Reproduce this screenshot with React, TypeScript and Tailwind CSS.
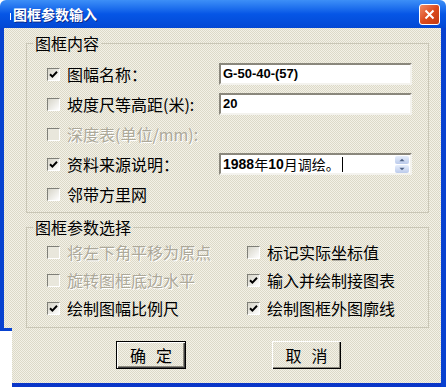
import React from "react";

const cjk = "font-['Noto_Sans_CJK_SC','Noto_Sans',sans-serif]";
const dither =
  "bg-[repeating-conic-gradient(#f3f1e7_0%_25%,#dcd9c8_0%_50%)] bg-[length:2px_2px]";

function Check({ checked, disabled }: { checked?: boolean; disabled?: boolean }) {
  return (
    <span
      className={`flex h-[13px] w-[13px] shrink-0 items-center justify-center border border-t-[#7f7f78] border-l-[#7f7f78] border-r-white border-b-white ${
        disabled ? "bg-[#e9e7dc]" : "bg-gradient-to-br from-[#d6d4c8] to-white"
      }`}
    >
      {checked && (
        <svg width="9" height="9" viewBox="0 0 9 9">
          <path d="M1 4.2 L3.4 6.6 L8 1.8" fill="none" stroke="#000" strokeWidth="2" />
        </svg>
      )}
    </span>
  );
}

function Option({
  label,
  checked,
  disabled,
}: {
  label: string;
  checked?: boolean;
  disabled?: boolean;
}) {
  return (
    <div className="flex items-center gap-[7px]">
      <Check checked={checked} disabled={disabled} />
      <span
        className={`text-[16px] leading-none whitespace-nowrap ${
          disabled ? "text-[#aca899] [text-shadow:1px_1px_0_#fff]" : "text-black"
        }`}
      >
        {label}
      </span>
    </div>
  );
}

function Field({ children }: { children: React.ReactNode }) {
  return (
    <div className="flex h-[22px] w-[193px] items-center border-2 border-t-[#8a877c] border-l-[#8a877c] border-r-[#f4f3ee] border-b-[#f4f3ee] bg-white pl-[2px]">
      {children}
    </div>
  );
}

function Spinner() {
  return (
    <div className="mr-[1px] flex flex-col gap-[1px]">
      {["M1 5 L4 2 L7 5", "M1 2 L4 5 L7 2"].map((d) => (
        <span
          key={d}
          className="flex h-[8px] w-[14px] items-center justify-center rounded-[2px] bg-gradient-to-b from-[#e6eefc] to-[#bccbeb]"
        >
          <svg width="8" height="6" viewBox="0 0 8 7">
            <path d={d} fill="#4d6185" />
          </svg>
        </span>
      ))}
    </div>
  );
}

export default function App() {
  return (
    <div className={`h-[389px] w-[446px] overflow-hidden bg-white ${cjk}`}>
      {/* title bar */}
      <div className="flex h-[28px] items-center rounded-t-[6px] bg-gradient-to-b from-[#3d8ff7] via-[#0656e6] to-[#0348d4] pl-[10px] pr-[6px]">
        <span className="mr-[2px] mt-[4px] h-[7px] w-[1px] bg-white" />
        <span className="text-[14px] font-bold text-white [text-shadow:1px_1px_0_#0a2a8a]">
          图框参数输入
        </span>
        <span className="ml-auto flex h-[21px] w-[21px] items-center justify-center rounded-[3px] border border-white bg-gradient-to-br from-[#f08a62] via-[#dc4a1c] to-[#c23a12]">
          <svg width="11" height="11" viewBox="0 0 11 11">
            <path d="M1.5 1.5 L9.5 9.5 M9.5 1.5 L1.5 9.5" stroke="#fff" strokeWidth="2" />
          </svg>
        </span>
      </div>

      <div className="flex">
        {/* left strip */}
        <div className="flex w-[12px] flex-col">
          <div className={`h-[303px] border-l-4 border-b-[3px] border-[#0842d0] ${dither}`} />
        </div>

        {/* dialog body */}
        <div className="flex w-[429px] flex-col">
          <div className={`h-[355px] pl-[14px] pr-[12px] pt-[6px] ${dither}`}>
            <fieldset className="border border-[#c9c6b6] pb-[3px] pt-[7px]">
              <legend className="ml-[6px] px-[2px] text-[16px] leading-[18px] text-black">
                图框内容
              </legend>
              <div className="flex h-[30px] items-center">
                <div className="w-[192px] pl-[20px]">
                  <Option label="图幅名称：" checked />
                </div>
                <Field>
                  <span className="font-['Liberation_Sans',sans-serif] text-[13px] font-bold">
                    G-50-40-(57)
                  </span>
                </Field>
              </div>
              <div className="flex h-[30px] items-center">
                <div className="w-[192px] pl-[20px]">
                  <Option label="坡度尺等高距(米):" />
                </div>
                <Field>
                  <span className="font-['Liberation_Sans',sans-serif] text-[13px] font-bold">20</span>
                </Field>
              </div>
              <div className="flex h-[30px] items-center">
                <div className="w-[192px] pl-[20px]">
                  <Option label="深度表(单位/mm):" disabled />
                </div>
              </div>
              <div className="flex h-[30px] items-center">
                <div className="w-[192px] pl-[20px]">
                  <Option label="资料来源说明：" checked />
                </div>
                <Field>
                  <span className="flex flex-1 items-center text-[14px]">
                    <span className="font-['Liberation_Sans',sans-serif] font-bold">1988</span>年
                    <span className="font-['Liberation_Sans',sans-serif] font-bold">10</span>月调绘。
                    <span className="ml-[2px] h-[15px] w-[1px] bg-black" />
                  </span>
                  <Spinner />
                </Field>
              </div>
              <div className="flex h-[30px] items-center">
                <div className="w-[192px] pl-[20px]">
                  <Option label="邻带方里网" />
                </div>
              </div>
            </fieldset>

            <fieldset className="mt-[5px] border border-[#c9c6b6] pb-[5px] pt-[2px]">
              <legend className="ml-[6px] px-[2px] text-[16px] leading-[18px] text-black">
                图框参数选择
              </legend>
              <div className="grid grid-cols-[220px_1fr]">
                <div className="flex h-[28px] items-center pl-[20px]">
                  <Option label="将左下角平移为原点" disabled />
                </div>
                <div className="flex h-[28px] items-center">
                  <Option label="标记实际坐标值" />
                </div>
                <div className="flex h-[28px] items-center pl-[20px]">
                  <Option label="旋转图框底边水平" disabled />
                </div>
                <div className="flex h-[28px] items-center">
                  <Option label="输入并绘制接图表" checked />
                </div>
                <div className="flex h-[28px] items-center pl-[20px]">
                  <Option label="绘制图幅比例尺" checked />
                </div>
                <div className="flex h-[28px] items-center">
                  <Option label="绘制图框外图廓线" checked />
                </div>
              </div>
            </fieldset>

            <div className="mt-[13px] flex justify-center gap-[86px] pl-[2px]">
              <button className="flex h-[28px] w-[70px] items-center justify-center gap-[10px] border border-black text-[16px] text-black shadow-[inset_1px_1px_0_#fff,inset_-1px_-1px_0_#404040,inset_-2px_-2px_0_#8a877c]">
                <span>确</span>
                <span>定</span>
              </button>
              <button className="flex h-[28px] w-[69px] items-center justify-center gap-[10px] text-[16px] text-black shadow-[inset_1px_1px_0_#fff,inset_-1px_-1px_0_#000,inset_-2px_-2px_0_#8a877c]">
                <span>取</span>
                <span>消</span>
              </button>
            </div>
          </div>
          <div className="h-[4px] bg-[#0a36c8]" />
        </div>

        {/* right border */}
        <div className="h-[359px] w-[5px] bg-[#0841d0]" />
      </div>
    </div>
  );
}
